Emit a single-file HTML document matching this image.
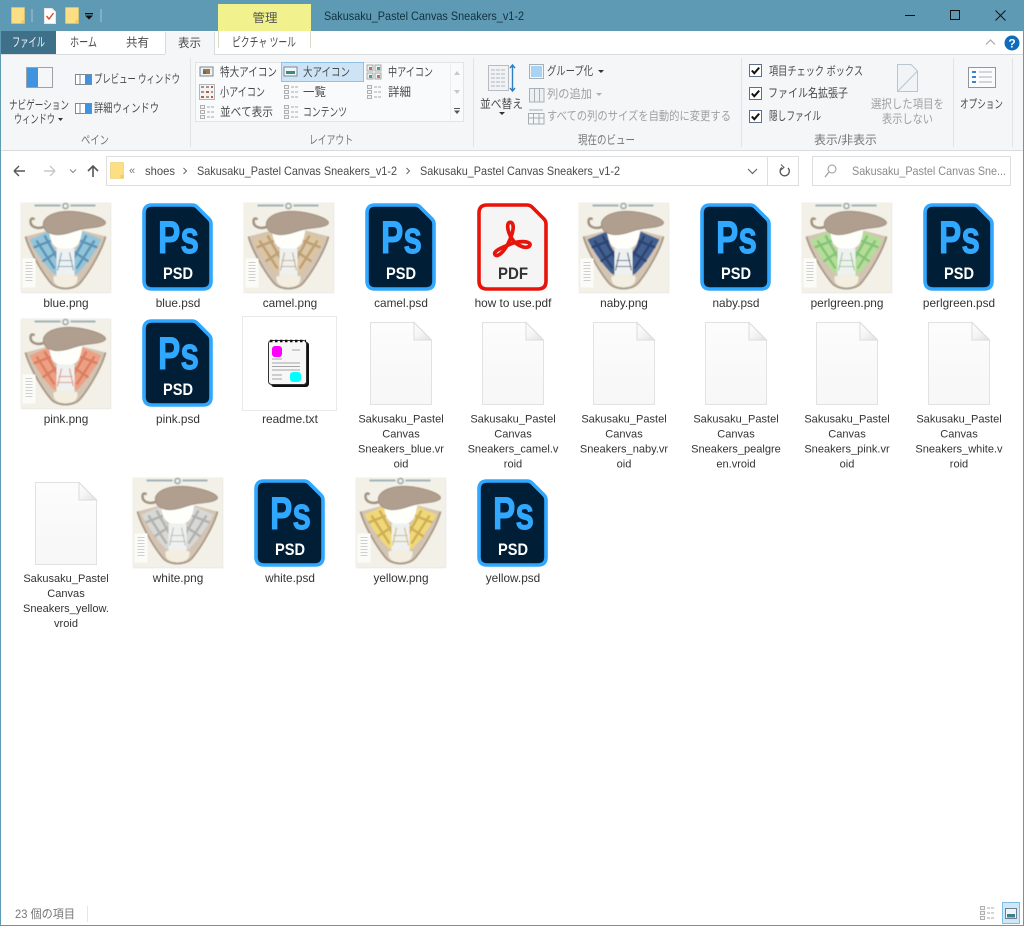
<!DOCTYPE html>
<html lang="ja"><head><meta charset="utf-8"><title>Explorer</title>
<style>
html,body{margin:0;padding:0;background:#fff;width:1024px;height:926px;overflow:hidden}
svg{display:block;position:absolute;left:0;top:0;filter:blur(.3px)}
text{font-family:"Liberation Sans","Noto Sans CJK JP",sans-serif;font-size:12px;fill:#4a4a4a}
.l text{font-size:11.8px;fill:#333;text-anchor:middle}
.l.s text{font-size:11.05px}
.g{fill:#a0a0a0}
.h{fill:#777}
.ps{font-weight:bold;font-size:45px;fill:#31a8ff;stroke:#31a8ff;stroke-width:.9px}
.psd{font-weight:bold;font-size:17px;fill:#fff}
</style></head><body>
<svg width="1024" height="926" viewBox="0 0 1024 926" xmlns="http://www.w3.org/2000/svg">
<defs>
<linearGradient id="blank" x1="0" y1="0" x2="0" y2="1"><stop offset="0" stop-color="#fcfcfc"/><stop offset="1" stop-color="#f7f7f7"/></linearGradient>
<linearGradient id="foldg" x1="0" y1="0" x2="1" y2="1"><stop offset="0" stop-color="#fff"/><stop offset=".5" stop-color="#f4f4f4"/><stop offset="1" stop-color="#e0e0e0"/></linearGradient>
<filter id="soft" x="-5%" y="-5%" width="110%" height="110%"><feGaussianBlur stdDeviation="0.6"/></filter>
<symbol id="shoe" viewBox="0 0 90 90" width="90" height="90" overflow="visible">
<rect x=".5" y=".5" width="90" height="90" fill="#dcdcdc" filter="url(#soft)"/>
<rect x="0" y="0" width="90" height="90" fill="#f3f1e7"/>
<g filter="url(#soft)">
<path d="M14,3H40M50,3H75" stroke="#a0b2b8" stroke-width="2"/>
<circle cx="45" cy="3.500" r="2.600" fill="none" stroke="#94a4a9" stroke-width="1.400"/>
<path d="M5,34 L28,28 L62,28 L85,34 C82,46 70,68 60,80 C54,88 36,88 30,80 C20,68 8,46 5,34Z" fill="#d3c4b3"/>
<path d="M9,37 L28,29 L32,43 L38,53 L40,74 L33,71 C24,62 15,49 9,37Z" fill="var(--a)"/>
<path d="M81,37 L62,29 L58,43 L52,53 L50,74 L57,71 C66,62 75,49 81,37Z" fill="var(--a)"/>
<path d="M16,38L34,66M24,33L38,58M74,38L56,66M66,33L52,58M13,45L31,38M22,59L37,49M77,45L59,38M68,59L53,49" stroke="var(--b)" stroke-width="2.400" stroke-opacity=".8" fill="none"/>
<path d="M28,28 C30,34 29,42 38,46 H52 C61,42 60,34 62,28Z" fill="#fefefb"/>
<rect x="36" y="46" width="18" height="27" fill="#eef1ef"/>
<path d="M41,50 L37,68M49,50 L53,68M38,58H52M37,64H53" stroke="var(--b)" stroke-opacity=".7" stroke-width="1.100" fill="none"/>
<path d="M33,74 C38,72 52,72 57,74 C58,82 52,85 45,85 C38,85 32,82 33,74Z" fill="#f3eee0"/>
<path d="M5,34 C8,46 20,68 30,80 C36,88 54,88 60,80 C70,68 82,46 85,34" fill="none" stroke="#a89785" stroke-width="1.800"/>
<path d="M24,24 C18,27 10,25 10,19 C10,16 12,15 14,17" fill="none" stroke="#a2917f" stroke-width="2.400"/>
<path d="M23,20 C26,11 40,8.500 52,9 C66,10 83,15 85,20 C85,24 74,25 64,26 C55,27 46,33 35,32 C27,31 22,27 23,20Z" fill="#b09f8f" stroke="#a08f7f" stroke-width="1"/>
</g>
<rect x="2" y="56" width="13" height="29" fill="#fbfbf8"/>
<path d="M5,60H12M5,63H12M5,66H12M5,69H12M5,72H12M5,75H12M5,78H12" stroke="#cfcfcf" stroke-width="1.100"/>
</symbol>
<symbol id="psdb" viewBox="0 0 71 88" width="71" height="88" overflow="visible">
<path d="M10,2 H50 Q53,2 55,4 L67,16 Q69,18 69,21 V78 Q69,86 61,86 H10 Q2,86 2,78 V10 Q2,2 10,2Z" fill="#001e36" stroke="#31a8ff" stroke-width="3.600"/>
</symbol>
<symbol id="blankf" viewBox="0 0 62 83" width="62" height="83" overflow="visible">
<path d="M.5,.5 H44 L61.5,18 V82.5 H.5Z" fill="url(#blank)" stroke="#e2e2e2"/>
<path d="M44,.5 V18 H61.5Z" fill="url(#foldg)" stroke="#dcdcdc"/>
</symbol>
<symbol id="folder" viewBox="0 0 14 17" width="14" height="17" overflow="visible">
<path d="M.5,.5H13.500V16.500H.5Z" fill="#fcdf85" stroke="#e8c968" stroke-width=".6"/>
<path d="M10.500,13H13.500V16.500H10.500Z" fill="#f3cb5c"/>
</symbol>
<symbol id="pane" viewBox="0 0 17 11" width="17" height="11" overflow="visible">
<rect x=".5" y=".5" width="16" height="10" fill="#fff" stroke="#7c8a96"/>
<rect x="10" y="1" width="6" height="9" fill="#3f94e0"/>
<path d="M5,1V10" stroke="#7c8a96"/>
</symbol>
<symbol id="lay" viewBox="0 0 16 16" width="16" height="16" overflow="visible">
<path d="M1,1h6v6h-6zM9,1h6v6h-6zM1,9h6v6h-6zM9,9h6v6h-6z" fill="#eef1f3" stroke="#a3a9ad"/>
<path d="M3,3h3v3h-3z" fill="#c27a45"/><path d="M11,3h3v3h-3z" fill="#5f9a70"/><path d="M3,11h3v3h-3z" fill="#5f9a70"/><path d="M11,11h3v3h-3z" fill="#c27a45"/>
</symbol>
<symbol id="small" viewBox="0 0 16 16" width="16" height="16" overflow="visible">
<rect x=".5" y=".5" width="15" height="15" fill="#f3f3f3" stroke="#b5b5b5"/>
<path d="M2,3h3M7,3h3M12,3h2M2,8h3M7,8h3M12,8h2M2,13h3M7,13h3M12,13h2" stroke="#999" stroke-width="2"/>
<path d="M12,3h2M7,8h3M2,13h3M12,13h2" stroke="#c05a40" stroke-width="2"/>
</symbol>
<symbol id="lst" viewBox="0 0 16 16" width="16" height="16" overflow="visible">
<path d="M1.500,1.500h4v3h-4zM1.500,6.500h4v3h-4zM1.500,11.500h4v3h-4z" fill="#f3f3f3" stroke="#b0b0b0"/>
<path d="M8,3H15M8,8H15M8,13H15" stroke="#a8a8a8" stroke-dasharray="3 1"/>
</symbol>
<symbol id="chk" viewBox="0 0 13 13" width="13" height="13" overflow="visible">
<rect x=".5" y=".5" width="12" height="12" fill="#fff" stroke="#5f6f85"/>
<path d="M2.800,6.500 L5.300,9.200 L10.200,3.600" fill="none" stroke="#111" stroke-width="2"/>
</symbol>
</defs>

<!-- chrome -->
<rect x="0" y="0" width="1024" height="926" fill="#fff"/>
<rect x="0" y="0" width="1024" height="31" fill="#5f9ab4"/>
<rect x="218" y="4" width="93" height="27" fill="#f1f28d"/>
<text x="252.500" y="22" textLength="25" lengthAdjust="spacingAndGlyphs" style="fill:#555">管理</text>
<text x="324" y="20" textLength="200" lengthAdjust="spacingAndGlyphs" style="fill:#12303f">Sakusaku_Pastel Canvas Sneakers_v1-2</text>
<!-- qat -->
<use href="#folder" x="11" y="7"/>
<rect x="31" y="9" width="2" height="13" fill="#7fb0c5"/>
<path d="M44.500,8.500H52L55.500,12V23.500H44.500Z" fill="#fff" stroke="#e6e6e6"/>
<path d="M46.500,16L49,19L53.500,13" fill="none" stroke="#d9492f" stroke-width="1.400"/>
<use href="#folder" x="65" y="7"/>
<rect x="85" y="13" width="8" height="1.300" fill="#111"/>
<path d="M85,15.500H93L89,19.500Z" fill="#111"/>
<rect x="100" y="9" width="2" height="13" fill="#7fb0c5"/>
<!-- window buttons -->
<path d="M905,15.500H915" stroke="#111" stroke-width="1"/>
<rect x="950.500" y="10.500" width="9" height="9" fill="none" stroke="#111"/>
<path d="M995.500,10.500L1005.500,20.500M1005.500,10.500L995.500,20.500" stroke="#111"/>
<!-- tabs -->
<rect x="1" y="31" width="55" height="23" fill="#3e7189"/>
<text x="12" y="46.500" textLength="33" lengthAdjust="spacingAndGlyphs" style="fill:#f1f5f7;font-size:12.500px">ファイル</text>
<text x="70" y="46.500" textLength="27" lengthAdjust="spacingAndGlyphs" style="font-size:12.500px">ホーム</text>
<text x="126" y="46.500" textLength="23" lengthAdjust="spacingAndGlyphs">共有</text>
<path d="M218.500,31V48M310.500,31V48" stroke="#d9d9c8"/>
<text x="232" y="46.500" textLength="64" lengthAdjust="spacingAndGlyphs" style="font-size:12.500px">ピクチャ ツール</text>
<path d="M986,44.500L990.500,40L995,44.500" fill="none" stroke="#a8a8a8" stroke-width="1.200"/>
<circle cx="1012" cy="43" r="7.500" fill="#0f6cbd"/>
<text x="1012" y="47.500" text-anchor="middle" style="fill:#fff;font-weight:bold;font-size:12px">?</text>
<!-- ribbon -->
<rect x="1" y="54" width="1022" height="96" fill="#f5f6f7"/>
<path d="M1,54.500H165M214,54.500H1023" stroke="#dadbdc"/>
<path d="M1,150.500H1023" stroke="#dadbdc"/>
<path d="M165.500,32V54M214.500,32V54" stroke="#dadbdc"/>
<rect x="166" y="32" width="48" height="23" fill="#f5f6f7"/>
<text x="178" y="47" textLength="23" lengthAdjust="spacingAndGlyphs">表示</text>
<path d="M190.500,58V147M473.500,58V147M741.500,58V147M953.500,58V147M1012.500,58V147" stroke="#e2e3e4"/>
<text x="81" y="144" textLength="28" lengthAdjust="spacingAndGlyphs" class="h">ペイン</text>
<text x="309" y="144" textLength="44" lengthAdjust="spacingAndGlyphs" class="h">レイアウト</text>
<text x="578" y="144" textLength="57" lengthAdjust="spacingAndGlyphs" class="h">現在のビュー</text>
<text x="814" y="144" textLength="63" lengthAdjust="spacingAndGlyphs" class="h">表示/非表示</text>
<!-- pane group -->
<rect x="26.500" y="67.500" width="26" height="20" fill="#f4f6f8" stroke="#9aa3aa"/>
<rect x="27" y="68" width="11" height="19" fill="#3f94e0"/>
<text x="9" y="109" textLength="60" lengthAdjust="spacingAndGlyphs">ナビゲーション</text>
<text x="14" y="123" textLength="41" lengthAdjust="spacingAndGlyphs">ウィンドウ</text>
<path d="M58,118H63L60.500,121Z" fill="#333"/>
<use href="#pane" x="75" y="74"/>
<text x="94" y="83" textLength="86" lengthAdjust="spacingAndGlyphs">プレビュー ウィンドウ</text>
<use href="#pane" x="75" y="103"/>
<text x="94" y="112" textLength="65" lengthAdjust="spacingAndGlyphs">詳細ウィンドウ</text>
<!-- gallery -->
<rect x="195.500" y="62.500" width="268" height="59" fill="#f9fafb" stroke="#e3e4e6"/>
<path d="M450.500,63V121" stroke="#eceded"/>
<rect x="281.500" y="62.500" width="82" height="19" fill="#cde4f7" stroke="#90c2e8"/>
<rect x="200" y="67" width="13" height="9" fill="#eef0f2" stroke="#7c8790"/><rect x="203" y="69" width="7" height="5" fill="#a0763a"/><rect x="203" y="71" width="3" height="3" fill="#3f6fa8"/>
<rect x="284" y="67" width="13" height="9" fill="#eef6fb" stroke="#7c8790"/><rect x="286" y="71" width="9" height="3" fill="#3f8a72"/>
<use href="#lay" x="366" y="64"/><use href="#small" x="199" y="84"/>
<use href="#lst" x="283" y="84"/><use href="#lst" x="366" y="84"/><use href="#lst" x="199" y="104"/><use href="#lst" x="283" y="104"/>
<text x="220" y="76" textLength="57" lengthAdjust="spacingAndGlyphs">特大アイコン</text>
<text x="303" y="76" textLength="47" lengthAdjust="spacingAndGlyphs">大アイコン</text>
<text x="388" y="76" textLength="45" lengthAdjust="spacingAndGlyphs">中アイコン</text>
<text x="220" y="96" textLength="45" lengthAdjust="spacingAndGlyphs">小アイコン</text>
<text x="303" y="96" textLength="23" lengthAdjust="spacingAndGlyphs">一覧</text>
<text x="388" y="96" textLength="23" lengthAdjust="spacingAndGlyphs">詳細</text>
<text x="220" y="116" textLength="53" lengthAdjust="spacingAndGlyphs">並べて表示</text>
<text x="303" y="116" textLength="44" lengthAdjust="spacingAndGlyphs">コンテンツ</text>
<path d="M454,75L457,71L460,75Z" fill="#c8c8c8"/><path d="M454,90L457,94L460,90Z" fill="#c8c8c8"/>
<path d="M454,108.500H460" stroke="#555"/><path d="M454,110.500H460L457,114Z" fill="#555"/>
<!-- view group -->
<rect x="488.500" y="65.500" width="20" height="25" fill="#f0f2f3" stroke="#b5bcc2"/>
<path d="M491,70H506M491,74H506M491,78H506M491,82H506M491,86H506" stroke="#c4cbd1" stroke-width="1.600" stroke-dasharray="4 1"/>
<path d="M512.500,65V91M510,68L512.500,65L515,68M510,88L512.500,91L515,88" fill="none" stroke="#2f7fc4" stroke-width="1.400"/>
<text x="480" y="108" textLength="43" lengthAdjust="spacingAndGlyphs">並べ替え</text>
<path d="M499,112H505L502,115Z" fill="#333"/>
<rect x="529.500" y="64.500" width="14" height="14" fill="#f5f6f7" stroke="#a7b0b8"/>
<rect x="531" y="66" width="11" height="11" fill="#a9d3f5"/>
<text x="547" y="75" textLength="46" lengthAdjust="spacingAndGlyphs">グループ化</text>
<path d="M598,70H604L601,73Z" fill="#333"/>
<path d="M529.500,88.500H544V102H529.500Z M534.500,88.500V102M539.500,88.500V102" fill="#eef1f3" stroke="#a9b1b8"/>
<text x="547" y="98" textLength="45" lengthAdjust="spacingAndGlyphs" class="g">列の追加</text>
<path d="M596,93H602L599,96Z" fill="#b0b0b0"/>
<path d="M528.500,113.500H544V124H528.500ZM528.500,118H544M533.500,113.500V124M539,113.500V124M529,110H543" fill="none" stroke="#a3adb5"/>
<text x="547" y="120" textLength="184" lengthAdjust="spacingAndGlyphs" class="g">すべての列のサイズを自動的に変更する</text>
<!-- show/hide -->
<use href="#chk" x="749" y="64"/><use href="#chk" x="749" y="87"/><use href="#chk" x="749" y="110"/>
<text x="769" y="75" textLength="94" lengthAdjust="spacingAndGlyphs">項目チェック ボックス</text>
<text x="768" y="97" textLength="80" lengthAdjust="spacingAndGlyphs">ファイル名拡張子</text>
<text x="769" y="120" textLength="52" lengthAdjust="spacingAndGlyphs">隠しファイル</text>
<path d="M897.500,64.500H911L917.500,71V91.500H897.500Z" fill="#f1f4f7" stroke="#b9c6d2"/>
<path d="M897.500,91.500L917.500,71" stroke="#b9c6d2"/>
<text x="871" y="108" textLength="73" lengthAdjust="spacingAndGlyphs" class="g">選択した項目を</text>
<text x="882" y="123" textLength="51" lengthAdjust="spacingAndGlyphs" class="g">表示しない</text>
<rect x="968.500" y="67.500" width="27" height="20" fill="#fafbfc" stroke="#8f979e"/>
<path d="M972,72h4M972,77h4M972,82h4" stroke="#3f83c7" stroke-width="2"/>
<path d="M979,72H992M979,77H992M979,82H992" stroke="#a9b0b6"/>
<text x="960" y="108" textLength="43" lengthAdjust="spacingAndGlyphs">オプション</text>
<!-- nav -->
<path d="M14,171H25M14,171L19,166M14,171L19,176" fill="none" stroke="#555" stroke-width="1.400"/>
<path d="M44,171H55M55,171L50,166M55,171L50,176" fill="none" stroke="#c8c8c8" stroke-width="1.400"/>
<path d="M70,169.500L73,172.500L76,169.500" fill="none" stroke="#888"/>
<path d="M93,177V166M88,171L93,166L98,171" fill="none" stroke="#555" stroke-width="1.600"/>
<rect x="106.500" y="156.500" width="692" height="29" fill="#fff" stroke="#dedede"/>
<path d="M767.500,157V185" stroke="#dedede"/>
<use href="#folder" x="110" y="162"/>
<text x="129" y="174" style="font-size:11px;fill:#777">«</text>
<text x="145" y="175" textLength="30" lengthAdjust="spacingAndGlyphs">shoes</text>
<path d="M183.500,168L186.500,171L183.500,174" fill="none" stroke="#666"/>
<text x="197" y="175" textLength="200" lengthAdjust="spacingAndGlyphs">Sakusaku_Pastel Canvas Sneakers_v1-2</text>
<path d="M406.500,168L409.500,171L406.500,174" fill="none" stroke="#666"/>
<text x="420" y="175" textLength="200" lengthAdjust="spacingAndGlyphs">Sakusaku_Pastel Canvas Sneakers_v1-2</text>
<path d="M748,169L752.500,173.500L757,169" fill="none" stroke="#666" stroke-width="1.200"/>
<path d="M788,168A4.600,4.600 0 1 1 782,167.500" fill="none" stroke="#555" stroke-width="1.300"/>
<path d="M781,164.500L784,167.500L781,170" fill="none" stroke="#555"/>
<rect x="812.500" y="156.500" width="198" height="29" fill="#fff" stroke="#dedede"/>
<circle cx="832" cy="169" r="4" fill="none" stroke="#999"/><path d="M829,172L825,177" stroke="#999" stroke-width="1.200"/>
<text x="852" y="175" textLength="154" lengthAdjust="spacingAndGlyphs" style="fill:#8a8a8a">Sakusaku_Pastel Canvas Sne...</text>

<!-- ROW 1 -->
<use href="#shoe" x="20.500" y="202.500" style="--a:#92c5da;--b:#5086ac"/>
<use href="#psdb" x="142" y="203"/><text class="ps" x="158" y="253" textLength="41" lengthAdjust="spacingAndGlyphs">Ps</text><text class="psd" x="163" y="279" textLength="30" lengthAdjust="spacingAndGlyphs">PSD</text>
<use href="#shoe" x="243.500" y="202.500" style="--a:#dcc5a2;--b:#b4956a"/>
<use href="#psdb" x="365" y="203"/><text class="ps" x="381" y="253" textLength="41" lengthAdjust="spacingAndGlyphs">Ps</text><text class="psd" x="386" y="279" textLength="30" lengthAdjust="spacingAndGlyphs">PSD</text>
<path d="M487,205 H527 Q530,205 532,207 L544,219 Q546,221 546,224 V281 Q546,289 538,289 H487 Q479,289 479,281 V213 Q479,205 487,205Z" fill="#f5f5f5" stroke="#e8140c" stroke-width="3.600"/>
<g transform="translate(465,195) scale(.3333)"><path d="M91,180 C100,188 125,165 140,120 C148,95 145,82 135,82 C125,82 125,105 140,130 C155,155 190,165 195,150 C198,138 160,135 130,150 C105,160 82,170 91,180Z" fill="none" stroke="#e8140c" stroke-width="11"/></g>
<text x="498" y="279" textLength="30" lengthAdjust="spacingAndGlyphs" style="font-weight:bold;font-size:17px;fill:#333">PDF</text>
<use href="#shoe" x="578.500" y="202.500" style="--a:#42608f;--b:#2a3c6a"/>
<use href="#psdb" x="700" y="203"/><text class="ps" x="716" y="253" textLength="41" lengthAdjust="spacingAndGlyphs">Ps</text><text class="psd" x="721" y="279" textLength="30" lengthAdjust="spacingAndGlyphs">PSD</text>
<use href="#shoe" x="801.500" y="202.500" style="--a:#b4de98;--b:#78ba70"/>
<use href="#psdb" x="923" y="203"/><text class="ps" x="939" y="253" textLength="41" lengthAdjust="spacingAndGlyphs">Ps</text><text class="psd" x="944" y="279" textLength="30" lengthAdjust="spacingAndGlyphs">PSD</text>
<g class="l">
<text x="66" y="307">blue.png</text><text x="178" y="307">blue.psd</text><text x="290" y="307">camel.png</text><text x="401" y="307">camel.psd</text><text x="513" y="307">how to use.pdf</text><text x="624" y="307">naby.png</text><text x="736" y="307">naby.psd</text><text x="847" y="307">perlgreen.png</text><text x="959" y="307">perlgreen.psd</text>
</g>

<!-- ROW 2 -->
<use href="#shoe" x="20.500" y="318.500" style="--a:#eda083;--b:#d6755a"/>
<use href="#psdb" x="142" y="319"/><text class="ps" x="158" y="369" textLength="41" lengthAdjust="spacingAndGlyphs">Ps</text><text class="psd" x="163" y="395" textLength="30" lengthAdjust="spacingAndGlyphs">PSD</text>
<rect x="242.500" y="316.500" width="94" height="94" fill="#fff" stroke="#e9e9e9"/>
<rect x="271" y="342" width="38" height="45" rx="3" fill="#111"/>
<rect x="268.500" y="340.500" width="38" height="44" rx="3" fill="#f7f7f7" stroke="#333"/>
<path d="M270,341H306" stroke="#111" stroke-width="2.400" stroke-dasharray="2.500 2.500"/>
<rect x="272" y="346" width="10" height="11" rx="3" fill="#f0f"/>
<rect x="290" y="372" width="11" height="10" rx="3" fill="#0ff"/>
<path d="M272,359H282M272,363H300M272,366.500H300M272,370H300M272,375H282M272,379H282M292,350H300" stroke="#a5a5a5"/>
<use href="#blankf" x="370" y="322"/>
<use href="#blankf" x="482" y="322"/>
<use href="#blankf" x="593" y="322"/>
<use href="#blankf" x="705" y="322"/>
<use href="#blankf" x="816" y="322"/>
<use href="#blankf" x="928" y="322"/>
<g class="l">
<text x="66" y="423">pink.png</text><text x="178" y="423">pink.psd</text><text x="290" y="423">readme.txt</text>
</g>
<g class="l s">
<text x="401" y="422.500">Sakusaku_Pastel</text><text x="401" y="437.500">Canvas</text><text x="401" y="452.500">Sneakers_blue.vr</text><text x="401" y="467.500">oid</text>
<text x="513" y="422.500">Sakusaku_Pastel</text><text x="513" y="437.500">Canvas</text><text x="513" y="452.500">Sneakers_camel.v</text><text x="513" y="467.500">roid</text>
<text x="624" y="422.500">Sakusaku_Pastel</text><text x="624" y="437.500">Canvas</text><text x="624" y="452.500">Sneakers_naby.vr</text><text x="624" y="467.500">oid</text>
<text x="736" y="422.500">Sakusaku_Pastel</text><text x="736" y="437.500">Canvas</text><text x="736" y="452.500">Sneakers_pealgre</text><text x="736" y="467.500">en.vroid</text>
<text x="847" y="422.500">Sakusaku_Pastel</text><text x="847" y="437.500">Canvas</text><text x="847" y="452.500">Sneakers_pink.vr</text><text x="847" y="467.500">oid</text>
<text x="959" y="422.500">Sakusaku_Pastel</text><text x="959" y="437.500">Canvas</text><text x="959" y="452.500">Sneakers_white.v</text><text x="959" y="467.500">roid</text>
</g>

<!-- ROW 3 -->
<use href="#blankf" x="35" y="482"/>
<use href="#shoe" x="132.500" y="477.500" style="--a:#d8d8d4;--b:#a8a8a6"/>
<use href="#psdb" x="254" y="479"/><text class="ps" x="270" y="529" textLength="41" lengthAdjust="spacingAndGlyphs">Ps</text><text class="psd" x="275" y="555" textLength="30" lengthAdjust="spacingAndGlyphs">PSD</text>
<use href="#shoe" x="355.500" y="477.500" style="--a:#f0d878;--b:#c4a44c"/>
<use href="#psdb" x="477" y="479"/><text class="ps" x="493" y="529" textLength="41" lengthAdjust="spacingAndGlyphs">Ps</text><text class="psd" x="498" y="555" textLength="30" lengthAdjust="spacingAndGlyphs">PSD</text>
<g class="l s">
<text x="66" y="582">Sakusaku_Pastel</text><text x="66" y="597">Canvas</text><text x="66" y="612">Sneakers_yellow.</text><text x="66" y="627">vroid</text>
</g>
<g class="l">
<text x="178" y="582">white.png</text><text x="290" y="582">white.psd</text><text x="401" y="582">yellow.png</text><text x="513" y="582">yellow.psd</text>
</g>

<!-- status -->
<text x="15" y="918" textLength="60" lengthAdjust="spacingAndGlyphs" class="h">23 個の項目</text>
<path d="M87.500,906V922" stroke="#e6e6e6"/>
<use href="#lst" x="979" y="905"/>
<rect x="1002.500" y="902.500" width="17" height="21" fill="#cde8fa" stroke="#7fbfe3"/>
<rect x="1005.500" y="908.500" width="11" height="10" fill="#eef6fb" stroke="#6f7f8c"/>
<rect x="1007" y="914" width="8" height="3.500" fill="#3f7f8c"/>
<!-- window border -->
<path d="M.5,31V925.500H1023.500V31" fill="none" stroke="#5f9ab4"/>
</svg>
</body></html>
